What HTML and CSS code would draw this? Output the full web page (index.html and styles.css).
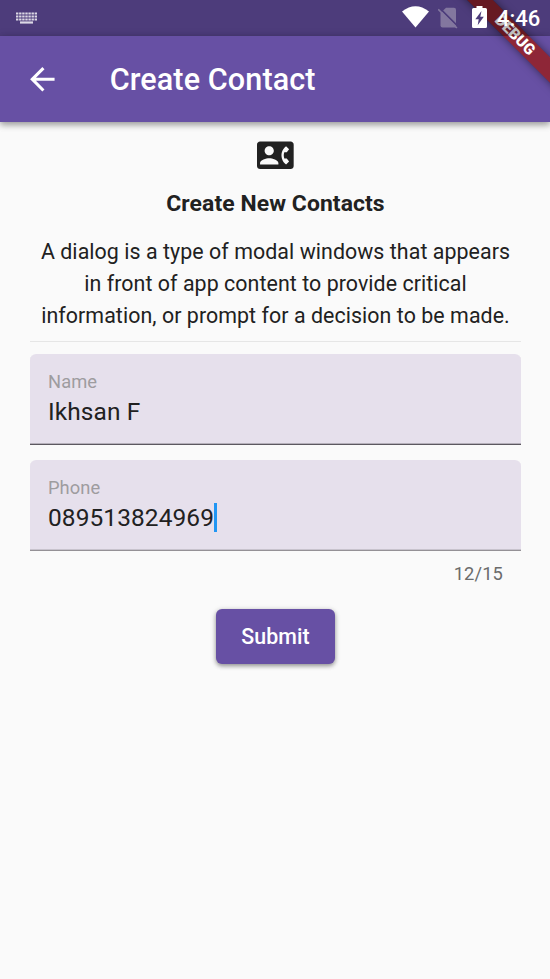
FILE: index.html
```
<!DOCTYPE html>
<html lang="en">
<head>
<meta charset="utf-8">
<title>Create Contact</title>
<link rel="stylesheet" href="styles.css">
</head>
<body>
<div class="status">
  <svg class="keyboard" viewBox="0 0 21 12"><path d="M0 1.500H21M0 4.500H21M0 7.500H21" stroke="currentColor" stroke-width="2.200" stroke-dasharray="2.400 .7"/><path d="M4 10.500H17" stroke="currentColor" stroke-width="2.200"/></svg>
  <svg class="wifi" viewBox="0 0 27 22"><path d="M0 5.500Q13.500-5 27 5.500L13.500 21.500Z" fill="currentColor"/></svg>
  <svg class="nosim" viewBox="0 0 20 22"><path d="M2.500 6L8 .7H16Q18 .7 18 2.700V20.500H4.500Q2.500 20.500 2.500 18.500Z" fill="#83779f"/><path d="M1.900 1.300L20.300 19.700" stroke="#4d3c7b" stroke-width="1.800"/><path d="M.2 2.300L18.900 21" stroke="#83779f" stroke-width="1.700"/></svg>
  <svg class="battery" viewBox="0 0 15 22"><path d="M4.500 0H10.500V2H13.500Q15 2 15 3.500V20.500Q15 22 13.500 22H1.500Q0 22 0 20.500V3.500Q0 2 1.500 2H4.500Z" fill="currentColor"/><path d="M9.500 5L3.300 13.300H6.700L5.700 19.300L11.800 10.800H8.300Z" fill="#4d3c7b"/></svg>
  <span class="clock">4:46</span>
</div>
<header class="appbar">
  <svg class="back" viewBox="0 0 24 24"><path fill="currentColor" d="M20 11H7.830l5.590-5.590L12 4l-8 8 8 8 1.410-1.410L7.830 13H20v-2z"/></svg>
  <h1>Create Contact</h1>
</header>
<div class="ribbon-clip"><div class="ribbon">DEBUG</div><div class="ribbon-shade"></div></div>
<main>
  <svg class="contact" viewBox="0 0 24 24"><path fill="#212121" d="M22 3H2C.9 3 0 3.900 0 5v14c0 1.100.9 2 2 2h20c1.100 0 1.990-.9 1.990-2L24 5c0-1.100-.9-2-2-2zM8 6c1.660 0 3 1.340 3 3s-1.340 3-3 3-3-1.340-3-3 1.340-3 3-3zm6 12H2v-1c0-2 4-3.100 6-3.100s6 1.100 6 3.100v1zm3.850-4h1.640L21 16l-1.990 1.990c-1.310-.98-2.280-2.380-2.730-3.990-.18-.64-.28-1.310-.28-2s.1-1.360.28-2c.45-1.620 1.420-3.010 2.730-3.990L21 8l-1.510 2h-1.640c-.22.630-.35 1.300-.35 2s.13 1.370.35 2z"/></svg>
  <h2>Create New Contacts</h2>
  <p class="intro">A dialog is a type of modal windows that appears<br>in front of app content to provide critical<br>information, or prompt for a decision to be made.</p>
  <div class="field name"><span class="label">Name</span><span class="value">Ikhsan F</span></div>
  <div class="field phone"><span class="label">Phone</span><span class="value">089513824969<i class="caret"></i></span></div>
  <div class="counter">12/15</div>
  <button class="submit">Submit</button>
</main>
</body>
</html>
```
FILE: styles.css
```
* { box-sizing: border-box; }
body {
  margin: 0;
  height: 979px;
  overflow: hidden;
  position: relative;
  background: #fafafa;
  color: #212121;
  font-family: Roboto, sans-serif;
}
svg { display: block; flex: none; }
.status {
  height: 36px;
  background: #4d3c7b;
  color: #fff;
  display: flex;
  align-items: flex-start;
  padding: 0 11px 0 16px;
}
.keyboard { width: 21px; height: 12px; margin-top: 12px; color: #dcd8e5; }
.wifi { width: 27px; height: 22px; margin: 6px 0 0 auto; }
.nosim { width: 20px; height: 22px; margin: 7px 0 0 9px; }
.battery { position: relative; z-index: 4; width: 15px; height: 22px; margin: 6px 0 0 14px; }
.clock {
  position: relative;
  z-index: 4;
  width: 42px;
  margin-left: 10px;
  font-size: 22px;
  font-weight: 500;
  line-height: 37px;
  white-space: nowrap;
}
.appbar {
  height: 86px;
  background: #6750a4;
  color: #fff;
  display: flex;
  align-items: center;
  padding-left: 23.500px;
  box-shadow: 0 3px 6px rgba(0,0,0,.28), 0 1px 9px rgba(0,0,0,.18);
}
.back { width: 36.700px; height: 36.700px; }
h1 { margin: 2px 0 0 49.500px; font-size: 30.550px; font-weight: 500; line-height: 36px; letter-spacing: .1px; white-space: nowrap; }
.ribbon-clip {
  position: absolute;
  z-index: 3;
  top: 0;
  right: 0;
  width: 130px;
  height: 122px;
  overflow: hidden;
}
.ribbon {
  position: absolute;
  left: 24px;
  top: 26px;
  width: 142px;
  height: 18.300px;
  transform: rotate(45deg);
  background: rgba(152,28,28,.8);
  box-shadow: 0 0 9px rgba(0,0,0,.5);
  color: #fff;
  font-size: 15.500px;
  font-weight: 900;
  line-height: 18.300px;
  text-align: center;
}
.ribbon-shade { position: absolute; left: 0; top: 0; width: 130px; height: 36px; background: rgba(0,0,0,.25); clip-path: polygon(47px 0, 73px 0, 109px 36px, 83px 36px); }
main { padding: 15px 29px 0 30px; display: flex; flex-direction: column; align-items: center; }
.contact { width: 36.700px; height: 36.700px; }
h2 { margin: 14px 0 0; font-size: 22.920px; font-weight: 700; line-height: 32px; letter-spacing: .08px; white-space: nowrap; }
.intro {
  align-self: stretch;
  margin: 16px 0 0;
  height: 106px;
  border-bottom: 1px solid #e6e6e6;
  font-size: 21.390px;
  letter-spacing: .06px;
  line-height: 32.080px;
  text-align: center;
  white-space: nowrap;
}
.field {
  align-self: stretch;
  height: 91px;
  padding: 16px 18px 0;
  background: #e6e0ec;
  border-radius: 6px 6px 0 0;
  border-bottom: 1px solid #5c5860;
  box-shadow: inset 0 -1px #b5b0ba;
  display: flex;
  flex-direction: column;
}
.name { margin-top: 12px; }
.phone { margin-top: 15px; border-bottom-color: #949196; box-shadow: inset 0 -1px #c8c3cd; }
.label { font-size: 18.330px; line-height: 23px; letter-spacing: .06px; color: #9e9c9f; }
.value { display: flex; align-items: center; font-size: 24.440px; line-height: 37px; letter-spacing: .1px; }
.caret { width: 3px; height: 29px; background: #2196f3; }
.counter { align-self: flex-end; margin: 11.500px 18px 0 0; font-size: 18.330px; line-height: 24px; letter-spacing: .12px; color: #6b6b6b; }
.submit {
  margin-top: 22.500px;
  width: 119px;
  height: 55px;
  padding: 1px 0 0;
  border: 0;
  border-radius: 6px;
  background: #6750a4;
  color: #fff;
  font: 500 21.390px Roboto, sans-serif;
  letter-spacing: .1px;
  box-shadow: 0 2px 4px rgba(0,0,0,.35), 0 1px 6px rgba(0,0,0,.14);
}
```
